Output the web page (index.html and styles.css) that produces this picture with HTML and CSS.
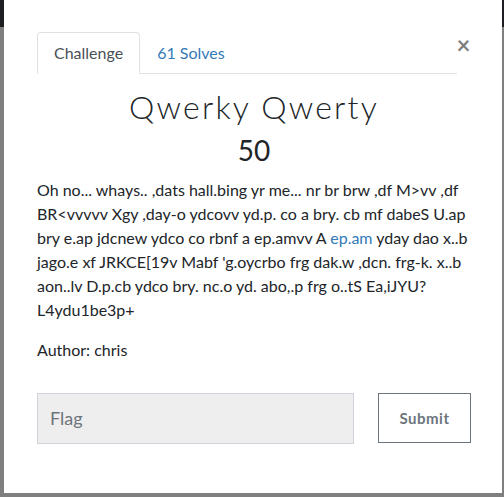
FILE: index.html
```
<!DOCTYPE html>
<html lang="en">
<head>
<meta charset="utf-8">
<title>Qwerky Qwerty</title>
<link rel="stylesheet" href="styles.css">
</head>
<body>
<div class="modal">
  <div class="modal-header">
    <ul class="nav-tabs">
      <li class="nav-item"><a class="nav-link active" href="#">Challenge</a></li>
      <li class="nav-item"><a class="nav-link" href="#">61 Solves</a></li>
    </ul>
    <button class="close" type="button" aria-label="Close">&times;</button>
  </div>
  <h2 class="challenge-name">Qwerky Qwerty</h2>
  <h3 class="challenge-value">50</h3>
  <div class="challenge-desc">
    <p>Oh no... whays.. ,dats hall.bing yr me... nr br brw ,df M&gt;vv ,df BR&lt;vvvvv Xgy ,day-o ydcovv yd.p. co a bry. cb mf dabeS U.ap bry e.ap jdcnew ydco co rbnf a ep.amvv A <a href="#">ep.am</a> yday dao x..b jago.e xf JRKCE[19v Mabf 'g.oycrbo frg dak.w ,dcn. frg-k. x..b aon..lv D.p.cb ydco bry. nc.o yd. abo,.p frg o..tS Ea,iJYU? L4ydu1be3p+</p>
    <p>Author: chris</p>
  </div>
  <form class="flag-form">
    <input class="flag-input" type="text" placeholder="Flag">
    <button class="submit-btn" type="button">Submit</button>
  </form>
</div>
</body>
</html>
```
FILE: styles.css
```
html, body {
  margin: 0;
  padding: 0;
}
body {
  height: 497px;
  background: linear-gradient(#1c1e21 0, #1c1e21 27px, #7f7f7f 27px);
  font-family: Lato, "Noto Sans", sans-serif;
  color: #212529;
  overflow: hidden;
}
.modal {
  box-sizing: border-box;
  margin-left: 4px;
  width: 498px;
  height: 493px;
  background: #fff;
  padding: 32px 31px 0 33px;
}
.modal-header {
  display: flex;
  align-items: flex-start;
  margin-right: 1px;
}
.nav-tabs {
  flex: 1;
  display: flex;
  list-style: none;
  margin: 0;
  padding: 0;
  border-bottom: 1px solid #dee2e6;
}
.nav-item {
  margin-bottom: -1px;
}
.nav-link {
  display: block;
  padding: 8px 16px;
  font-size: 16px;
  line-height: 24px;
  color: #337ab7;
  text-decoration: none;
  border: 1px solid transparent;
  border-top-left-radius: 4px;
  border-top-right-radius: 4px;
}
.nav-link.active {
  color: #495057;
  background: #fff;
  border-color: #dee2e6 #dee2e6 #fff;
}
.close {
  width: 13px;
  padding: 0;
  margin: 1px 0 0;
  border: 0;
  background: transparent;
  font-family: Lato, sans-serif;
  font-size: 24px;
  font-weight: 700;
  line-height: 24px;
  color: #000;
  opacity: 0.5;
  display: flex;
  justify-content: center;
}
.challenge-name {
  margin: 14px 0 8px;
  text-align: center;
  font-weight: 300;
  font-size: 32px;
  line-height: 1.2;
  letter-spacing: 2.2px;
}
.challenge-value {
  margin: 0 0 10px;
  text-align: center;
  font-weight: 400;
  font-size: 28px;
  line-height: 1.2;
}
.challenge-desc p {
  margin: 0 0 16px;
  font-size: 16px;
  line-height: 24px;
}
.challenge-desc a {
  color: #337ab7;
  text-decoration: none;
}
.flag-form {
  display: flex;
  gap: 24px;
  margin-top: 31px;
}
.flag-input {
  box-sizing: border-box;
  flex: 0 0 317px;
  height: 51px;
  padding: 0 12px;
  background: #eeeeee;
  border: 1px solid #ced4da;
  font-family: Lato, sans-serif;
  font-size: 18px;
  color: #495057;
}
.flag-input::placeholder {
  color: #6c757d;
}
.submit-btn {
  box-sizing: border-box;
  flex: 0 0 93px;
  height: 50px;
  background: #fff;
  border: 1px solid #6c757d;
  font-family: Lato, sans-serif;
  font-weight: 700;
  font-size: 15px;
  letter-spacing: 0.5px;
  color: #6c757d;
}
```
